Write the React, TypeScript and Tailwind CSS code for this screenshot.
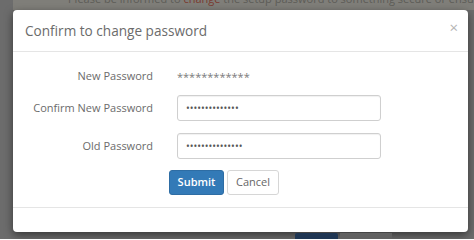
import React from 'react';

const font = { fontFamily: '"Open Sans", "Noto Sans", sans-serif' };

const App: React.FC = () => {
  return (
    <div className="w-[474px] h-[239px] overflow-hidden bg-[#6c6c6c] flex flex-col" style={font}>
      {/* page behind the backdrop, top edge */}
      <div className="h-[10px] overflow-hidden flex items-start bg-[#7f7e79] ml-[13px]">
        <div className="w-[22px] h-[5px] ml-[39px] bg-[#4e3a1e] rounded-b-[2px]" />
        <div className="ml-[16px] -mt-[8px] text-[11px] leading-[14px] text-[#5d5c57] whitespace-nowrap">
          Please be informed to <span className="text-[#7a3a2f]">change</span> the setup password to something secure or ensure
        </div>
      </div>

      {/* modal */}
      <div className="ml-[13px] w-[455px] h-[222px] bg-white rounded-[4px] shadow-[0_3px_9px_rgba(0,0,0,0.5)] flex flex-col">
        <div className="h-[42px] flex items-center justify-between px-[12px] border-b border-[#e5e5e5]">
          <h4 className="text-[13.6px] text-[#6b6b6b] leading-none">Confirm to change password</h4>
          <button className="text-[15px] leading-none text-[#b4b4b4] -mt-[6px] -mr-[2px]">×</button>
        </div>

        <div className="flex-1 pl-[12px] pt-[11px] border-b border-[#e5e5e5] text-[11px] text-[#6b6b6b]">
          <div className="flex items-center h-[26px]">
            <label className="w-[128px] text-right">New Password</label>
            <span className="ml-[24px] text-[#7a7a7a] pt-[2px]">************</span>
          </div>
          <div className="flex items-center h-[26px] mt-[6px]">
            <label className="w-[128px] text-right">Confirm New Password</label>
            <input
              type="password"
              readOnly
              value="12345678901234"
              className="ml-[24px] w-[204px] h-[26px] px-[8px] border border-[#cfcfcf] rounded-[3px] text-[10px] text-[#555] shadow-[inset_0_1px_1px_rgba(0,0,0,0.06)] outline-none"
            />
          </div>
          <div className="flex items-center h-[26px] mt-[12px]">
            <label className="w-[128px] text-right">Old Password</label>
            <input
              type="password"
              readOnly
              value="123456789012345"
              className="ml-[24px] w-[204px] h-[26px] px-[8px] border border-[#cfcfcf] rounded-[3px] text-[10px] text-[#555] shadow-[inset_0_1px_1px_rgba(0,0,0,0.06)] outline-none"
            />
          </div>
          <div className="flex gap-[3px] mt-[11px] ml-[144px]">
            <button className="w-[55px] h-[25px] rounded-[3px] bg-[#337ab7] border border-[#2e6da4] text-white text-[11px] font-semibold">
              Submit
            </button>
            <button className="w-[52px] h-[25px] rounded-[3px] bg-white border border-[#d6d6d6] text-[#666] text-[11px]">
              Cancel
            </button>
          </div>
        </div>

        <div className="h-[24px]" />
      </div>

      {/* page behind the backdrop, bottom edge */}
      <div className="flex-1 flex pt-[1px]">
        <div className="ml-[295px] w-[43px] bg-[#1f3653] rounded-t-[2px]" />
        <div className="ml-[2px] w-[52px] bg-[#616161]" />
      </div>
    </div>
  );
};

export default App;
